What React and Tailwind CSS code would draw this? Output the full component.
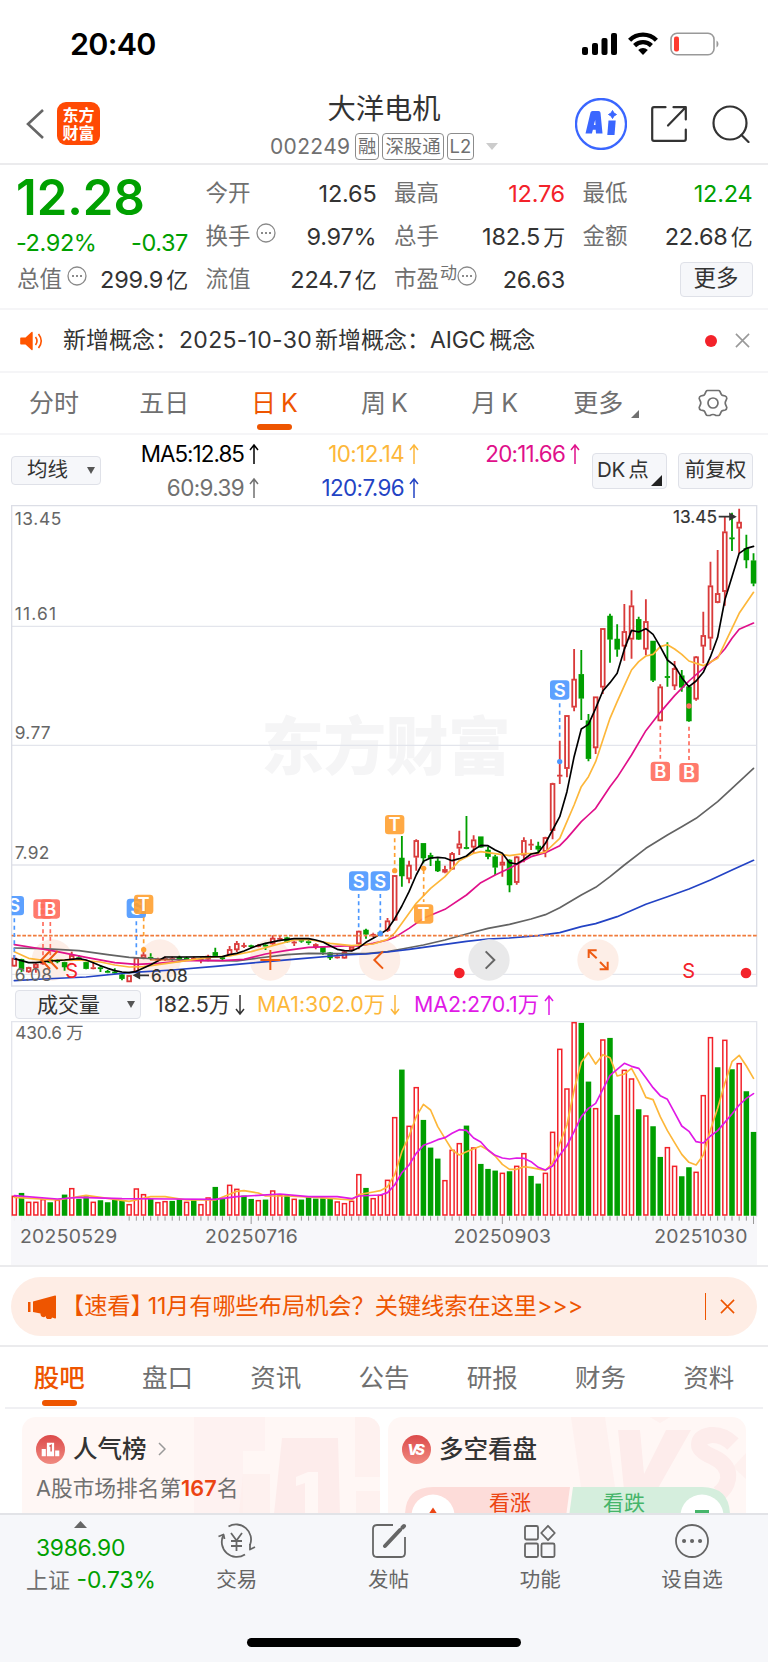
import clsx from 'clsx';

const RED = '#d93a3a';
const GREEN = '#009f00';

// Both charts use a 3x coordinate space, one candle every 21.53 units.
const px = (i) => 43 + i * 21.53;

// [direction, high, body top, body bottom, low]
const candles = [
  ['r', 1365, 1374, 1399, 1400], ['g', 1376, 1378, 1408, 1416], ['r', 1400, 1402, 1416, 1418], ['r', 1390, 1392, 1404, 1418],
  ['r', 1386, 1388, 1392, 1394], ['g', 1376, 1378, 1388, 1390], ['g', 1378, 1381, 1386, 1390], ['g', 1385, 1387, 1401, 1412],
  ['r', 1355, 1366, 1380, 1380], ['g', 1366, 1371, 1378, 1380], ['g', 1385, 1387, 1406, 1408], ['r', 1387, 1402, 1407, 1408],
  ['g', 1395, 1402, 1407, 1416], ['g', 1410, 1413, 1418, 1420], ['g', 1405, 1415, 1420, 1422], ['g', 1420, 1424, 1436, 1441],
  ['r', 1426, 1426, 1446, 1446], ['r', 1373, 1373, 1416, 1416], ['r', 1350, 1364, 1375, 1378], ['g', 1360, 1370, 1377, 1380],
  ['r', 1373, 1376, 1380, 1382], ['r', 1370, 1374, 1380, 1382], ['r', 1370, 1374, 1380, 1382], ['g', 1367, 1372, 1380, 1385],
  ['g', 1370, 1374, 1378, 1380], ['r', 1370, 1374, 1378, 1380], ['r', 1372, 1376, 1382, 1390], ['r', 1364, 1368, 1378, 1384],
  ['g', 1343, 1357, 1367, 1370], ['g', 1368, 1372, 1377, 1380], ['r', 1338, 1348, 1366, 1368], ['r', 1323, 1330, 1350, 1356],
  ['r', 1328, 1336, 1340, 1344], ['g', 1334, 1337, 1340, 1344], ['r', 1332, 1336, 1340, 1342], ['g', 1328, 1334, 1340, 1350],
  ['r', 1306, 1314, 1332, 1334], ['r', 1308, 1313, 1320, 1324], ['g', 1310, 1313, 1326, 1328], ['r', 1322, 1325, 1330, 1338],
  ['g', 1316, 1320, 1324, 1328], ['g', 1320, 1323, 1330, 1334], ['r', 1330, 1333, 1341, 1348], ['g', 1338, 1340, 1357, 1364],
  ['g', 1356, 1358, 1374, 1380], ['r', 1360, 1369, 1375, 1376], ['r', 1353, 1355, 1375, 1376], ['r', 1336, 1339, 1350, 1354],
  ['r', 1292, 1293, 1332, 1348], ['g', 1286, 1290, 1303, 1316], ['r', 1298, 1301, 1308, 1312], ['g', 1292, 1296, 1302, 1308],
  ['r', 1254, 1262, 1292, 1296], ['r', 1125, 1126, 1261, 1262], ['g', 1008, 1074, 1128, 1160], ['r', 1082, 1095, 1137, 1150],
  ['r', 1018, 1021, 1072, 1112], ['g', 1030, 1030, 1074, 1090], ['g', 1058, 1066, 1076, 1098], ['g', 1075, 1083, 1113, 1116],
  ['r', 1097, 1108, 1117, 1120], ['r', 1056, 1060, 1108, 1110], ['r', 992, 1031, 1045, 1065], ['g', 948, 1042, 1046, 1048],
  ['r', 1006, 1019, 1042, 1062], ['g', 1010, 1010, 1042, 1044], ['g', 1040, 1050, 1070, 1078], ['g', 1064, 1070, 1102, 1125],
  ['r', 1065, 1086, 1096, 1130], ['g', 1078, 1080, 1155, 1177], ['r', 1068, 1070, 1148, 1154], ['r', 1012, 1021, 1066, 1087],
  ['r', 1018, 1032, 1036, 1050], ['g', 1025, 1038, 1048, 1060], ['r', 1010, 1012, 1055, 1072], ['r', 848, 850, 992, 1018],
  ['r', 722, 825, 829, 852], ['r', 646, 646, 806, 832], ['r', 447, 537, 622, 634], ['g', 450, 523, 595, 660],
  ['g', 642, 662, 776, 784], ['r', 590, 590, 744, 762], ['r', 385, 385, 562, 582], ['g', 341, 348, 418, 488],
  ['g', 373, 417, 448, 470], ['r', 312, 394, 439, 482], ['r', 271, 317, 418, 476], ['g', 350, 358, 418, 420],
  ['r', 298, 364, 448, 466], ['g', 423, 423, 541, 546], ['r', 553, 560, 663, 664], ['g', 427, 529, 533, 560],
  ['r', 483, 505, 558, 570], ['g', 510, 527, 562, 575], ['g', 555, 560, 663, 665], ['r', 468, 470, 598, 602],
  ['r', 335, 406, 439, 490], ['r', 185, 257, 415, 450], ['r', 150, 280, 308, 310], ['r', 50, 95, 275, 317],
  ['g', 38, 113, 117, 153], ['r', 26, 66, 85, 160], ['g', 104, 145, 180, 205], ['g', 160, 182, 250, 259],
];

// [candle index, y] pairs
const averages = [
  {
    color: '#636363',
    points: [0, 1344, 4, 1346, 9, 1352, 13, 1364, 16, 1372, 20, 1377, 26, 1381, 31, 1383, 34, 1374, 38, 1364, 41, 1360, 45, 1361, 49, 1361, 52, 1355, 54, 1347, 57, 1335, 60, 1320, 63, 1302, 66, 1285, 69, 1273, 72, 1257, 74, 1244, 76, 1223, 79, 1185, 81, 1162, 83, 1130, 85, 1095, 88, 1045, 91, 1005, 93, 980, 95, 955, 98, 905, 100, 865, 103, 805],
  },
  {
    color: '#2343c4',
    points: [0, 1442, 4, 1437, 10, 1431, 16, 1418, 22, 1410, 28, 1399, 34, 1387, 40, 1376, 46, 1365, 49, 1362, 52, 1356, 55, 1348, 59, 1336, 63, 1324, 66, 1317, 69, 1314, 73, 1307, 76, 1298, 79, 1280, 81, 1271, 84, 1250, 88, 1213, 91, 1190, 94, 1167, 97, 1140, 100, 1110, 103, 1081],
  },
  {
    color: '#e0108a',
    points: [0, 1334, 3, 1344, 6, 1355, 10, 1372, 14, 1388, 17, 1393, 20, 1390, 24, 1382, 29, 1382, 32, 1378, 35, 1362, 38, 1351, 41, 1342, 44, 1340, 46, 1338, 48, 1338, 50, 1330, 52, 1320, 53, 1312, 55, 1285, 57, 1255, 60, 1228, 63, 1185, 65, 1148, 67, 1125, 69, 1105, 72, 1070, 74, 1058, 76, 1037, 77, 1015, 79, 965, 80, 945, 81, 925, 83, 860, 84, 832, 86, 765, 88, 692, 90, 637, 92, 587, 94, 543, 96, 505, 97, 487, 98, 471, 99, 447, 100, 415, 101, 388, 103, 369],
  },
  {
    color: '#fdb73a',
    points: [0, 1355, 2, 1375, 4, 1381, 9, 1380, 12, 1386, 14, 1395, 16, 1401, 18, 1400, 21, 1391, 24, 1382, 27, 1372, 30, 1368, 33, 1355, 36, 1337, 39, 1320, 41, 1318, 44, 1330, 47, 1337, 50, 1332, 52, 1318, 53, 1299, 54, 1270, 56, 1210, 58, 1165, 60, 1130, 62, 1082, 64, 1060, 65, 1055, 67, 1061, 69, 1067, 71, 1061, 73, 1060, 74, 1056, 76, 1015, 77, 965, 78, 915, 79, 860, 80, 830, 81, 785, 82, 720, 83, 655, 84, 605, 85, 557, 86, 510, 87, 485, 88, 468, 89, 463, 90, 440, 91, 434, 92, 447, 93, 463, 94, 483, 95, 490, 96, 497, 98, 475, 99, 430, 100, 385, 101, 340, 103, 277],
  },
  {
    color: '#000000',
    points: [0, 1376, 1, 1382, 2, 1388, 3, 1388, 5, 1383, 7, 1380, 9, 1376, 10, 1380, 11, 1388, 12, 1397, 13, 1405, 14, 1412, 15, 1416, 16, 1418, 17, 1414, 18, 1404, 19, 1394, 20, 1383, 21, 1371, 24, 1371, 29, 1370, 30, 1364, 31, 1360, 32, 1353, 33, 1344, 34, 1336, 35, 1330, 37, 1321, 39, 1316, 41, 1316, 42, 1320, 43, 1326, 44, 1337, 45, 1348, 46, 1352, 47, 1353, 48, 1343, 49, 1327, 50, 1315, 51, 1302, 52, 1288, 53, 1256, 54, 1218, 55, 1175, 56, 1125, 57, 1084, 58, 1074, 59, 1072, 60, 1074, 61, 1082, 62, 1076, 63, 1068, 64, 1050, 65, 1036, 66, 1037, 67, 1050, 68, 1060, 69, 1088, 70, 1092, 71, 1078, 72, 1062, 73, 1058, 74, 1030, 75, 990, 76, 950, 77, 875, 78, 770, 79, 687, 80, 673, 81, 625, 82, 573, 83, 548, 84, 520, 85, 448, 86, 391, 87, 396, 88, 386, 89, 403, 90, 440, 91, 480, 92, 497, 93, 533, 94, 560, 95, 543, 96, 517, 97, 470, 98, 412, 99, 300, 100, 230, 101, 160, 102, 145, 103, 139],
  },
];

const volumeTops = [
  588, 580, 606, 606, 598, 608, 600, 585, 565, 598, 590, 606, 602, 608, 601, 602, 613, 566, 583, 598, 607, 604, 604, 599, 606, 602,
  613, 593, 562, 596, 555, 567, 588, 598, 601, 600, 572, 585, 587, 597, 600, 592, 597, 596, 596, 605, 610, 603, 523, 565, 595, 585,
  540, 352, 210, 378, 262, 361, 444, 477, 541, 450, 430, 378, 443, 493, 508, 513, 519, 515, 498, 460, 529, 552, 519, 396, 147, 266,
  67, 70, 246, 325, 119, 115, 346, 210, 236, 329, 347, 380, 472, 442, 498, 530, 503, 516, 286, 112, 203, 120, 209, 190, 275, 397,
];

const volumeColors =
  'rgrrrgrgrggrggggrrrgrrggrgrrggrrggrgrrgrgggggrrrrgrrrrgrrgggrrrgrgggrgrrggrrrrrggrrggrrgrggrrggrrrgrgrgg';

const volumeAverages = [
  {
    color: '#fdb73a',
    points: [0, 592, 6, 600, 10, 586, 14, 598, 16, 604, 19, 590, 21, 590, 24, 600, 28, 600, 30, 583, 31, 574, 32, 572, 34, 579, 35, 588, 38, 588, 42, 592, 47, 600, 48, 584, 50, 576, 51, 572, 52, 560, 53, 524, 54, 455, 55, 408, 56, 350, 57, 313, 58, 330, 59, 380, 60, 415, 61, 450, 62, 465, 63, 455, 65, 438, 66, 450, 67, 468, 68, 493, 69, 508, 70, 508, 71, 500, 72, 503, 74, 511, 75, 490, 76, 430, 77, 375, 78, 270, 79, 187, 80, 158, 81, 192, 82, 164, 83, 173, 84, 228, 85, 222, 86, 205, 87, 245, 88, 292, 89, 299, 90, 350, 91, 392, 92, 428, 93, 463, 94, 487, 95, 495, 96, 465, 97, 390, 98, 325, 99, 250, 100, 185, 101, 166, 102, 198, 103, 235],
  },
  {
    color: '#e019e6',
    points: [0, 587, 6, 597, 9, 592, 15, 596, 22, 597, 28, 598, 31, 590, 34, 586, 37, 582, 41, 590, 45, 590, 47, 596, 48, 588, 51, 585, 52, 578, 53, 555, 54, 518, 55, 495, 56, 460, 57, 436, 58, 428, 59, 419, 60, 413, 61, 400, 62, 389, 63, 391, 64, 414, 65, 426, 66, 450, 67, 466, 68, 474, 69, 477, 70, 474, 71, 475, 72, 485, 73, 502, 74, 510, 75, 498, 76, 465, 77, 437, 78, 395, 79, 350, 80, 325, 81, 310, 82, 268, 83, 226, 84, 208, 85, 190, 86, 199, 87, 205, 88, 233, 89, 263, 90, 287, 91, 298, 92, 338, 93, 378, 94, 394, 95, 425, 96, 429, 97, 408, 98, 392, 99, 367, 100, 342, 101, 315, 102, 295, 103, 281],
  },
];

// Trade markers: dashed leader from y1 to y2, badge centred on (x, y)
const markers = [
  { label: 'S', x: 43, y: 1217, y1: 1255, y2: 1376, color: '#4b97ff' },
  { label: 'B', x: 129, y: 1227, y1: 1266, y2: 1372, color: '#ff6b5c' },
  { label: 'B', x: 151, y: 1227, y1: 1266, y2: 1372, color: '#ff6b5c' },
  { label: 'S', x: 409, y: 1225, y1: 1264, y2: 1372, color: '#4b97ff' },
  { label: 'T', x: 431, y: 1213, y1: 1252, y2: 1345, color: '#ffa030', dot: 1349 },
  { label: 'S', x: 1076, y: 1143, y1: 1182, y2: 1292, color: '#4b97ff' },
  { label: 'S', x: 1141, y: 1143, y1: 1182, y2: 1296, color: '#4b97ff', dot: 1301 },
  { label: 'T', x: 1184, y: 974, y1: 1015, y2: 1108, color: '#ffa030', dot: 1112 },
  { label: 'T', x: 1271, y: 1242, y1: 1110, y2: 1206, color: '#ffa030', dot: 1105 },
  { label: 'S', x: 1679, y: 570, y1: 610, y2: 712, color: '#4b97ff', dot: 785 },
  { label: 'B', x: 1981, y: 814, y1: 677, y2: 776, color: '#ff6b5c' },
  { label: 'B', x: 2067, y: 818, y1: 680, y2: 780, color: '#ff6b5c', dot: 618 },
];

const toPoints = (values) => {
  const out = [];
  for (let i = 0; i < values.length; i += 2) out.push(`${px(values[i])},${values[i + 1]}`);
  return out.join(' ');
};

const Line = ({ color, points }) => (
  <polyline points={toPoints(points)} fill="none" stroke={color} strokeWidth="5" strokeLinejoin="round" strokeLinecap="round" />
);

const Dots = ({ className }) => (
  <svg viewBox="0 0 20 20" className={clsx('h-5 w-5 shrink-0', className)} fill="none" stroke="#8a8a8a" strokeWidth="1.3">
    <circle cx="10" cy="10" r="9" />
    <path d="M5 10h2M9 10h2M13 10h2" strokeWidth="2" />
  </svg>
);

const Arrow = ({ down }) => (
  <svg viewBox="0 0 10 22" className={clsx('h-[22px] w-[10px] shrink-0', down && 'rotate-180')} fill="none" stroke="currentColor" strokeWidth="1.5">
    <path d="M5 21V2M1 7l4-5 4 5" />
  </svg>
);

const Close = ({ className }) => (
  <svg viewBox="0 0 16 16" className={className} fill="none" stroke="currentColor" strokeWidth="1.7">
    <path d="M1 1l14 14M15 1L1 15" />
  </svg>
);

const StatusBar = () => (
  <div className="flex h-[84px] items-center justify-between pr-[48px] pl-[70px] pt-1">
    <div className="text-[30.5px] leading-none font-semibold tracking-[-0.7px] text-black">20:40</div>
    <div className="flex items-center">
      <svg viewBox="0 0 36 24" className="h-6 w-9">
        <rect x="0" y="15" width="6" height="8" rx="2" />
        <rect x="10" y="11" width="6" height="12" rx="2" />
        <rect x="19.5" y="6" width="6" height="17" rx="2" />
        <rect x="29" y="1" width="6" height="22" rx="2" />
      </svg>
      <svg viewBox="0 0 30 24" className="ml-[10px] h-6 w-[30px]" fill="none" stroke="#000" strokeWidth="4.4">
        <path d="M1.6 8.2a19 19 0 0 1 26.8 0" />
        <path d="M6.6 13.6a12 12 0 0 1 16.8 0" />
        <path d="M15 23l-4.8-5a7 7 0 0 1 9.6 0z" fill="#000" stroke="none" />
      </svg>
      <svg viewBox="0 0 50 24" className="ml-3 h-6 w-[50px]" fill="none">
        <rect x="1" y="1.2" width="43" height="21.6" rx="6" stroke="#999" strokeWidth="1.6" />
        <rect x="4" y="4.4" width="5" height="15.2" rx="2" fill="#ff3b30" />
        <path d="M46.5 8.5c2.6 1.4 2.6 5.6 0 7z" fill="#999" />
      </svg>
    </div>
  </div>
);

const Badge = ({ children }) => (
  <span className="flex h-[27px] shrink-0 items-center rounded-[4px] border border-[#8c8c8c] px-[2px] text-[18.4px] leading-none whitespace-nowrap text-[#707070]">
    {children}
  </span>
);

const Header = () => (
  <header className="flex h-[81px] items-center border-b-2 border-[#ebebed]">
    <div className="flex w-[234px] items-center pl-[26px]">
      <svg viewBox="0 0 18 30" className="h-[30px] w-[18px]" fill="none" stroke="#666" strokeWidth="2.6">
        <path d="M17 1L2 15l15 14" />
      </svg>
      <div className="ml-[13px] flex h-[43px] w-[43px] flex-col items-center justify-center rounded-[9px] bg-[#ff4a04] text-[16px] leading-[18px] font-bold text-white">
        <span>东方</span>
        <span>财富</span>
      </div>
    </div>
    <div className="flex w-[300px] flex-col items-center">
      <h1 className="mt-[5px] text-[28.3px] leading-[36px] text-[#333]">大洋电机</h1>
      <div className="flex h-[34px] w-[228px] items-center pt-[5px]">
        <span className="w-[85px] shrink-0 text-[21px] tracking-[0.35px] text-[#707070]">002249</span>
        <div className="flex shrink-0 gap-[3px]">
          <Badge>融</Badge>
          <Badge>深股通</Badge>
          <Badge>L2</Badge>
        </div>
        <svg viewBox="0 0 12 7" className="ml-3 h-[7px] w-3 shrink-0" fill="#ccc">
          <path d="M0 0h12L6 7z" />
        </svg>
      </div>
    </div>
    <div className="flex w-[234px] items-center pl-[41px]">
      <svg viewBox="0 0 52 52" className="h-[52px] w-[52px]" fill="#3a66ff">
        <circle cx="26" cy="26" r="25" fill="none" stroke="#3a66ff" strokeWidth="2.3" />
        <path d="M10.5 35.5L15.500 14.500q.4-1.500 2-1.500h6q1.800 0 2 1.800l2 20.700h-6.500l-.3-3.700h-2.800l-1 3.700zM18.800 27h1.700l-.3-5z" fillRule="evenodd" />
        <path d="M33.500 22.500h7.200L39.500 37h-7.200z" />
        <path d="M37.500 12.500q.8 3 4 4-3.200 1-4 4-.8-3-4-4 3.200-1 4-4z" strokeWidth="1" stroke="#3a66ff" />
      </svg>
      <svg viewBox="0 0 36 36" className="ml-[24px] h-9 w-9" fill="none" stroke="#333" strokeWidth="2.2" strokeLinecap="round" strokeLinejoin="round">
        <path d="M14.5 1.200H3Q1.200 1.200 1.200 3v30q0 1.800 1.800 1.800h30q1.800 0 1.800-1.800V23.500M22.500 1.200h12.300V13.500M34 2L17 19.500" />
      </svg>
      <svg viewBox="0 0 38 38" className="ml-[25px] h-[38px] w-[38px]" fill="none" stroke="#333" strokeWidth="2.2" strokeLinecap="round">
        <circle cx="18" cy="18" r="16.5" />
        <path d="M29.5 30l7 7" />
      </svg>
    </div>
  </header>
);

const quotes = [
  { label: '今开', value: '12.65' },
  { label: '最高', value: '12.76', color: 'text-[#f3222a]' },
  { label: '最低', value: '12.24', color: 'text-[#00a000]' },
  { label: '换手', value: '9.97%', dots: true },
  { label: '总手', value: '182.5', unit: '万' },
  { label: '金额', value: '22.68', unit: '亿' },
];

const Quote = ({ label, sup, dots, value, unit, color = 'text-[#333]' }) => (
  <div className="flex h-[43px] items-center justify-between leading-none">
    <div className="flex items-center text-[22.5px] text-[#707070]">
      {label}
      {sup && <span className="-mt-3 ml-px text-[17px]">{sup}</span>}
      {dots && <Dots className={sup ? '-mt-2' : '-mt-2 ml-[5px]'} />}
    </div>
    <div className={clsx('flex items-center text-[23.5px] tracking-[-0.2px]', color)}>
      {value}
      {unit && <span className="ml-[3px] text-[22px]">{unit}</span>}
    </div>
  </div>
);

const QuotePanel = () => (
  <section className="grid h-[145px] grid-cols-[171px_171px_171px_170px] content-start gap-x-[17.5px] border-b-2 border-[#f5f5f7] pt-[7px] pl-[17px] text-[#333]">
    <div className="row-span-2 flex flex-col justify-between text-[#00a000]">
      <div className="mt-px -ml-px text-[49px] leading-[50px] font-semibold">12.28</div>
      <div className="-ml-px flex items-center justify-between pb-[3px] text-[23.5px] leading-[24px] tracking-[-0.4px]">
        <span>-2.92%</span>
        <span>-0.37</span>
      </div>
    </div>
    {quotes.map((quote) => (
      <Quote key={quote.label} {...quote} />
    ))}
    <Quote label="总值" dots value="299.9" unit="亿" />
    <Quote label="流值" value="224.7" unit="亿" />
    <Quote label="市盈" sup="动" dots value="26.63" />
    <div className="flex h-[43px] items-center justify-end">
      <button type="button" className="h-[35px] w-[73px] rounded-[4px] border border-[#dfe1e8] bg-[#f6f7fa] pb-[3px] text-[22.5px] leading-none">
        更多
      </button>
    </div>
  </section>
);

const Notice = () => (
  <div className="flex h-[63px] items-center border-b-2 border-[#f5f5f7] pr-[18px] pl-5">
    <svg viewBox="0 0 24 20" className="h-5 w-6" fill="#ff5500">
      <path d="M1 6.5h4.500L11.500 1q1.200-.8 1.200.8v16.400q0 1.600-1.200.8L5.500 13.500H1q-.8 0-.8-.8V7.300q0-.8.8-.8z" />
      <path d="M15.5 6q3 4 0 8M18.500 3q5.500 7 0 14" fill="none" stroke="#ff5500" strokeWidth="1.6" />
    </svg>
    <p className="ml-[19px] flex-1 text-[23px] leading-none whitespace-nowrap text-[#333]">
      新增概念：<span className="ml-px tracking-[0.3px]">2025-10-30</span>
      <span className="ml-[3px]">新增概念：</span>
      <span className="mr-1 tracking-[-0.2px]">AIGC</span>概念
    </p>
    <span className="mr-[18px] h-3 w-3 rounded-full bg-[#f3222a]" />
    <Close className="h-[15px] w-[15px] text-[#999]" />
  </div>
);

const periods = ['分时', '五日', '日 K', '周 K', '月 K'];

const PeriodTabs = () => (
  <nav className="-ml-[1px] grid h-[62px] w-[771px] grid-cols-7 border-b-2 border-[#f5f5f7] text-[25px] leading-none text-[#707070]">
    {periods.map((period) => {
      const active = period === '日 K';

      return (
        <div key={period} className={clsx('flex flex-col items-center pt-[18px]', active && 'text-[#ee5500]')}>
          <span className="[word-spacing:-2px]">{period}</span>
          {active && <span className="mt-[8px] h-[6px] w-[35px] rounded-[3px] bg-[#ee5500]" />}
        </div>
      );
    })}
    <div className="flex justify-center pt-[18px]">
      <span className="ml-[3px]">更多</span>
      <svg viewBox="0 0 8 8" className="mt-[19px] ml-[8px] h-2 w-2" fill="#707070">
        <path d="M8 0v8H0z" />
      </svg>
    </div>
    <div className="flex justify-center pt-[16px] pr-[3px]">
      <svg viewBox="0 0 30 28" className="h-7 w-[30px]" fill="none" stroke="#707070" strokeWidth="1.7" strokeLinejoin="round">
        <path d="M9.5 1.500h11q1 0 1.400.9l1.400 3q.4.800 1.300 1l2.600.6q1.600.500 1.600 2.500l-1.400 3.300q-.4 1.200 0 2.400l1.400 3.300q0 2-1.600 2.500l-2.600.6q-.9.200-1.300 1l-1.400 3q-.4.900-1.400.9h-2.500q-3-2-6 0H9.500q-1 0-1.400-.9l-1.400-3q-.4-.8-1.300-1L2.800 21q-1.600-.5-1.600-2.500l1.400-3.300q.4-1.200 0-2.400L1.200 9.500Q1.200 7.500 2.800 7l2.600-.6q.9-.2 1.300-1l1.400-3q.4-.9 1.400-.9z" />
        <circle cx="15" cy="14" r="5" />
      </svg>
    </div>
  </nav>
);

const Average = ({ className, children, down }) => (
  <span className={clsx('flex items-center justify-end gap-[5px]', className)}>
    {children}
    <Arrow down={down} />
  </span>
);

const AverageRow = () => (
  <div className="flex h-[70px] pl-[11px] text-[#333]">
    <button type="button" className="mt-[21px] flex h-[29px] w-[90px] items-center rounded-[4px] border border-[#dfe1e8] bg-[#f6f7fa] pb-px pl-[15px] text-[20.5px] leading-none">
      均线
      <svg viewBox="0 0 8 7" className="ml-[19px] h-[7px] w-2" fill="#555">
        <path d="M0 0h8L4 7z" />
      </svg>
    </button>
    <div className="grid w-[479px] grid-cols-[158px_160px_161px] content-start gap-y-[10px] pt-[7px] text-[22.4px] leading-[24px] tracking-[-0.6px]">
      <Average className="tracking-[-0.95px] text-black">MA5:12.85</Average>
      <Average className="text-[#fdb73a]">10:12.14</Average>
      <Average className="tracking-[-0.8px] text-[#e0108a]">20:11.66</Average>
      <Average className="text-[#707070]">60:9.39</Average>
      <Average className="text-[#2343c4]">120:7.96</Average>
    </div>
    <button type="button" className="mt-[18px] ml-[12px] flex h-[36px] w-[75px] items-center rounded-[4px] border border-[#dfe1e8] bg-[#f6f7fa] pb-px pl-[4px] text-[20.5px] leading-none whitespace-nowrap">
      <span className="mr-[3px] tracking-[-0.2px]">DK</span>点
      <svg viewBox="0 0 11 11" className="mt-[20px] ml-[2px] h-[11px] w-[11px] shrink-0" fill="#222">
        <path d="M11 0v11H0z" />
      </svg>
    </button>
    <button type="button" className="mt-[18px] ml-[11px] h-[36px] w-[75px] rounded-[4px] border border-[#dfe1e8] bg-[#f6f7fa] pb-px text-[20.5px] leading-none">
      前复权
    </button>
  </div>
);

const priceLabels = [
  { text: '13.45', y: 76, width: 140 },
  { text: '11.61', y: 361, width: 124 },
  { text: '9.77', y: 718, width: 108 },
  { text: '7.92', y: 1078, width: 104 },
  { text: '6.08', y: 1442, width: 112 },
];

const CandleChart = () => (
  <svg viewBox="0 15 2304 1446" className="block h-[482px] w-[768px]">
    <text x="1158" y="808" textAnchor="middle" fontSize="188" fontWeight="900" fill="#f5f5f6" textLength="748">
      东方财富
    </text>
    <g stroke="#e3e5ec" strokeWidth="4">
      <path d="M35 379H2270M35 736H2270M35 1095H2270M35 1423H2270" />
      <path d="M35 17H2270V1458H35z" fill="none" stroke="#dcdee6" />
    </g>
    {[157, 480, 811, 1139, 1794].map((x) => (
      <circle key={x} cx={x} cy="1380" r="62" fill="#fdeee7" />
    ))}
    {candles.map(([dir, high, top, bottom, low], i) => {
      const x = px(i);
      const color = dir === 'r' ? RED : GREEN;
      const thin = bottom - top < 8;

      return (
        <g key={i} stroke={color} strokeWidth="5.5" fill={dir === 'r' ? '#fff' : color}>
          <path d={`M${x} ${high}V${top}M${x} ${bottom}V${low}`} />
          {thin ? <path d={`M${x - 8} ${(top + bottom) / 2}h16`} /> : <rect x={x - 5.5} y={top + 2} width="11" height={bottom - top - 4} />}
        </g>
      );
    })}
    {averages.map((line) => (
      <Line key={line.color} {...line} />
    ))}
    <path d="M35 1307H2270" stroke="#f07c3c" strokeWidth="5" strokeDasharray="11 5" />
    {priceLabels.map(({ text, y, width }) => (
      <text key={text} x="44" y={y} fontSize="52" fill="#666" textLength={width}>
        {text}
      </text>
    ))}
    <clipPath id="frame">
      <rect x="35" y="17" width="2235" height="1441" />
    </clipPath>
    <g clipPath="url(#frame)">
      {markers.map(({ label, x, y, y1, y2, color, dot }) => (
        <g key={`${x}-${label}`}>
          <path d={`M${x} ${y1}V${y2}`} stroke={color} strokeWidth="5" strokeDasharray="12 10" />
          {dot && <circle cx={x} cy={dot} r="8" fill={color} />}
          <rect x={x - 29} y={y - 29} width="58" height="58" rx="10" fill={color} opacity="0.9" />
          <text x={x} y={y + 20} textAnchor="middle" fontSize="55" fontWeight="600" fill="#fff">
            {label}
          </text>
        </g>
      ))}
    </g>
    <g fontSize="52" fill="#333" stroke="#333" strokeWidth="0.5">
      <text x="2019" y="69" textLength="132">13.45</text>
      <text x="453" y="1446" textLength="110">6.08</text>
    </g>
    <g stroke="#333" strokeWidth="5" fill="#333">
      <path d="M2156 50h42M2190 42l15 8-15 8z" />
      <path d="M447 1426h-40M418 1418l-15 8 15 8z" />
    </g>
    <g fill="none" stroke="#ee5a12" strokeWidth="6">
      <path d="M150 1353l-26 27 26 27M173 1353l-26 27 26 27" />
      <path d="M450 1380h62" opacity="0.5" />
      <path d="M781 1380h60M811 1350v60" />
      <path d="M1149 1354l-26 26 26 26" />
      <path d="M1790 1375l-24-23M1766 1374v-23h24M1800 1386l22 22M1823 1385v23h-24" />
    </g>
    <circle cx="1467" cy="1380" r="62" fill="#e9e9ea" />
    <path d="M1457 1354l26 26-26 26" fill="none" stroke="#666" strokeWidth="6" />
    <g fill="#f3222a">
      <circle cx="1378" cy="1419" r="16" />
      <circle cx="2238" cy="1419" r="16" />
      <text x="215" y="1433" textAnchor="middle" fontSize="60">S</text>
      <text x="2066" y="1433" textAnchor="middle" fontSize="60">S</text>
    </g>
  </svg>
);

const VolumeHeader = () => (
  <div className="flex h-[33px] items-center pt-[2px] text-[21.4px] leading-none tracking-[-0.05px]">
    <button type="button" className="-mt-px ml-[15px] flex h-[29px] w-[126px] items-center rounded-[4px] border border-[#dfe1e8] bg-[#f6f7fa] pl-[21px] text-[21px] text-[#333]">
      成交量
      <svg viewBox="0 0 8 7" className="ml-[27px] h-[7px] w-2" fill="#555">
        <path d="M0 0h8L4 7z" />
      </svg>
    </button>
    <Average down className="w-[104px] text-[#333]">182.5万</Average>
    <Average down className="w-[155px] text-[#fdb73a]">MA1:302.0万</Average>
    <Average className="w-[154px] text-[#e019e6]">MA2:270.1万</Average>
  </div>
);

const dates = [
  { text: '20250529', x: 60, width: 292 },
  { text: '20250716', x: 615, width: 278 },
  { text: '20250903', x: 1361, width: 292 },
  { text: '20251030', x: 1963, width: 279 },
];

const VolumeChart = () => (
  <svg viewBox="0 60 2304 735" className="block h-[245px] w-[768px]">
    <rect x="33" y="648" width="2238" height="147" fill="#f7f7fa" />
    <path d="M35 650V65H2270V650" fill="none" stroke="#e3e5ec" strokeWidth="4" />
    {volumeTops.map((top, i) => {
      const red = volumeColors[i] === 'r';

      return (
        <rect
          key={i}
          x={px(i) - 6}
          y={top + 1}
          width="12"
          height={644 - top}
          fill={red ? '#fff' : GREEN}
          stroke={red ? '#f3222a' : GREEN}
          strokeWidth="4.5"
        />
      );
    })}
    {volumeAverages.map((line) => (
      <Line key={line.color} {...line} />
    ))}
    {volumeTops.map((_, i) => (
      <path
        key={i}
        d={i === 33 || i === 68 || i === 103 ? `M${px(i)} 649v23` : `M${px(i)} 649v13`}
        stroke={i < 16 ? '#efeff2' : '#999'}
        strokeWidth="3"
      />
    ))}
    <text x="46" y="118" fontSize="52" fill="#666" textLength="205">
      430.6 万
    </text>
    {dates.map(({ text, x, width }) => (
      <text key={text} x={x} y="730" fontSize="58" fill="#666" textLength={width}>
        {text}
      </text>
    ))}
  </svg>
);

const Promo = () => (
  <div className="h-[82px] border-y-2 border-[#ebebed] px-[11px] pt-[10px]">
    <div className="flex h-[59px] items-center rounded-full bg-[#feede5] pr-[22px] pl-[17px] text-[#ee5500]">
      <svg viewBox="0 0 29 24" className="h-6 w-[29px]" fill="#ee5500">
        <path d="M0 7h2.500v10H0zM5 6.500L27 .5q1-.3 1 .8v21.400q0 1-1 .7l-3-1q-.5 2-3 2-3 0-3.500-3.500-.8 1.500-2.500 1.200-2.500-.4-2.500-3.600L5 17z" />
      </svg>
      <p className="ml-[4px] flex-1 text-[23.2px] leading-none whitespace-nowrap">
        【速看<span className="tracking-[-6px]">】</span>
        <span className="tracking-[-0.3px]">11</span>月有哪些布局机会？关键线索在这里<span>&gt;&gt;&gt;</span>
      </p>
      <span className="mr-[14px] h-[27px] w-[1.5px] bg-[#ee5500]" />
      <Close className="h-[15px] w-[15px]" />
    </div>
  </div>
);

const sections = ['股吧', '盘口', '资讯', '公告', '研报', '财务', '资料'];

const SectionTabs = () => (
  <nav className="mx-[5px] grid h-[62px] grid-cols-7 border-b-2 border-[#f0f0f3] text-[25.5px] leading-none text-[#707070]">
    {sections.map((section, i) => (
      <div key={section} className={clsx('flex flex-col items-center pt-[18px]', i === 0 && 'font-medium text-[#ee5500]')}>
        <span>{section}</span>
        {i === 0 && <span className="mt-[9px] h-[6px] w-[35px] rounded-[3px] bg-[#ee5500]" />}
      </div>
    ))}
  </nav>
);

const Cards = () => (
  <div className="flex h-[104px] gap-2 overflow-hidden px-[22px] pt-[8px]">
    <div className="relative h-[120px] w-[358px] overflow-hidden rounded-[14px] bg-[#fff7f5] pl-[14px]">
      <svg viewBox="0 0 358 97" className="absolute top-0 left-0 h-[97px] w-[358px]" fill="#fdeceb">
        <path d="M172 0h71v34h-22v63h-49z" opacity="0.4" />
        <path d="M221 57h27v40h-31zM334 74h24v23h-24zM333 0h25v60h-25z" opacity="0.6" />
        <path d="M260 21h56l2 76h-22V55h-10l-12 5v9l9-3v31h-31z" />
      </svg>
      <div className="relative flex items-center pt-[16px]">
        <svg viewBox="0 0 28 28" className="h-[29px] w-[29px]">
          <linearGradient id="rank" x1="0" y1="0" x2="0" y2="1">
            <stop stopColor="#dc4a4a" />
            <stop offset="1" stopColor="#f08a80" />
          </linearGradient>
          <circle cx="14" cy="14" r="14" fill="url(#rank)" />
          <path d="M5.5 13.500h4v7h-4zM10.500 7.500h7v13h-7zM18.500 15h4v5.500h-4z" fill="#fff" />
          <path d="M13 11l1.600-1v6" fill="none" stroke="#dc5a55" strokeWidth="1.4" />
        </svg>
        <span className="ml-[8px] text-[24.5px] leading-[32px] font-medium text-[#333]">人气榜</span>
        <svg viewBox="0 0 8 14" className="ml-[11px] h-[14px] w-2" fill="none" stroke="#999" strokeWidth="1.5">
          <path d="M1 1l6 6-6 6" />
        </svg>
      </div>
      <p className="relative mt-[12px] text-[21.7px] leading-[22px] text-[#707070]">
        A股市场排名第<span className="font-semibold text-[#ec4413]">167</span>名
      </p>
    </div>
    <div className="relative h-[120px] w-[358px] overflow-hidden rounded-[14px] bg-[#fff7f5] pl-[14px]">
      <svg viewBox="0 0 358 97" className="absolute top-0 left-0 h-[97px] w-[358px]" fill="#fdeceb">
        <path d="M183 0h34l10 70h-34zM262 0h20l-10 6zM345 50l13-14v26z" opacity="0.6" />
        <path d="M230 13h22l4 44 22-44h25l-34 60h-33z" />
        <path d="M345 27q-10-10-22-9-12 2-12 10 0 6 14 12 17 8 15 22-2 10-10 15" fill="none" stroke="#fdeceb" strokeWidth="16" />
      </svg>
      <div className="relative flex items-center pt-[16px]">
        <svg viewBox="0 0 28 28" className="h-[29px] w-[29px]">
          <circle cx="14" cy="14" r="14" fill="url(#rank)" />
          <text x="13.5" y="19" textAnchor="middle" fontSize="14" fontWeight="800" fontStyle="italic" fill="#fff" textLength="17">
            VS
          </text>
        </svg>
        <span className="ml-[8px] text-[24.5px] leading-[32px] font-medium text-[#333]">多空看盘</span>
      </div>
      <div className="relative mt-[21px] ml-[3px] flex h-[60px] w-[325px] text-[21px] leading-none">
        <svg viewBox="0 0 325 60" className="absolute top-0 left-0 h-[60px] w-[325px]">
          <path d="M28 1h137l-8 59H0V30Q0 1 28 1z" fill="#fddcd9" />
          <path d="M168 1h129q28 0 28 29v30H160z" fill="#d5eedd" />
          <circle cx="28" cy="30" r="21.5" fill="#fff" />
          <circle cx="297" cy="30" r="21.5" fill="#fff" />
          <path d="M28 21.500l6 9H22z" fill="#ec4413" />
          <path d="M290 24h14v4h-14z" fill="#46b56a" />
        </svg>
        <span className="relative mt-[6px] ml-[84px] w-[114px] text-[#ec4413]">看涨</span>
        <span className="relative mt-[6px] text-[#46b56a]">看跌</span>
      </div>
    </div>
  </div>
);

const actions = [
  {
    label: '交易',
    icon: (
      <>
        <path d="M11.5 3.500A15 15 0 0 1 33 22M28 31.500A15 15 0 0 1 6.500 12" />
        <path d="M1.5 13.500l5-2 1 4.500M38 24l-5 2.500V21" />
        <path d="M14 10l5.500 7.500L25 10M19.500 17.500V28M14 18h11M14 23h11" />
      </>
    ),
  },
  {
    label: '发帖',
    icon: (
      <>
        <path d="M24 2H8Q4 2 4 6v24q0 4 4 4h24q4 0 4-4V14" />
        <path d="M16 23L31 7M33.500 4.500L35 3" strokeWidth="4" strokeLinecap="round" />
      </>
    ),
  },
  {
    label: '功能',
    icon: (
      <>
        <rect x="5" y="3" width="13" height="13.5" rx="1.5" />
        <rect x="5" y="20.5" width="13" height="13.5" rx="1.5" />
        <rect x="21.5" y="20.5" width="13" height="13.5" rx="1.5" />
        <path d="M28 2.800l6.800 7.200-6.800 7.200-6.800-7.200z" />
      </>
    ),
  },
  {
    label: '设自选',
    icon: (
      <>
        <circle cx="20" cy="18" r="16" />
        <path d="M12 18h.1M20 18h.1M28 18h.1" strokeWidth="4" strokeLinecap="round" />
      </>
    ),
  },
];

const BottomBar = () => (
  <footer className="flex h-[149px] flex-col items-center border-t-2 border-[#e2e3e7] bg-[#f6f7fa]">
    <div className="flex h-[123px] w-full">
      <div className="flex w-[161px] flex-col items-center pt-[6px] text-[22.8px] leading-none">
        <svg viewBox="0 0 13 7" className="h-[7px] w-[13px]" fill="#666">
          <path d="M0 7h13L6.500 0z" />
        </svg>
        <span className="mt-[9px] tracking-[-0.2px] text-[#00a000]">3986.90</span>
        <span className="mt-[9px] ml-[21px] whitespace-nowrap text-[#707070]">
          <span className="text-[22px]">上证</span> <span className="text-[#00a000]">-0.73%</span>
        </span>
      </div>
      {actions.map(({ label, icon }) => (
        <div key={label} className="flex w-[151.7px] flex-col items-center pt-[8px]">
          <svg viewBox="0 0 40 36" className="h-9 w-10" fill="none" stroke="#666" strokeWidth="1.8" strokeLinejoin="round">
            {icon}
          </svg>
          <span className="mt-[11px] text-[20.5px] leading-none text-[#666]">{label}</span>
        </div>
      ))}
    </div>
    <div className="h-[9px] w-[274px] rounded-full bg-black" />
  </footer>
);

const App = () => (
  <main className="h-[1662px] w-[768px] overflow-hidden bg-white font-['Inter','Noto_Sans_CJK_SC',sans-serif]">
    <StatusBar />
    <Header />
    <QuotePanel />
    <Notice />
    <PeriodTabs />
    <AverageRow />
    <CandleChart />
    <VolumeHeader />
    <VolumeChart />
    <Promo />
    <SectionTabs />
    <Cards />
    <BottomBar />
  </main>
);

export default App;
